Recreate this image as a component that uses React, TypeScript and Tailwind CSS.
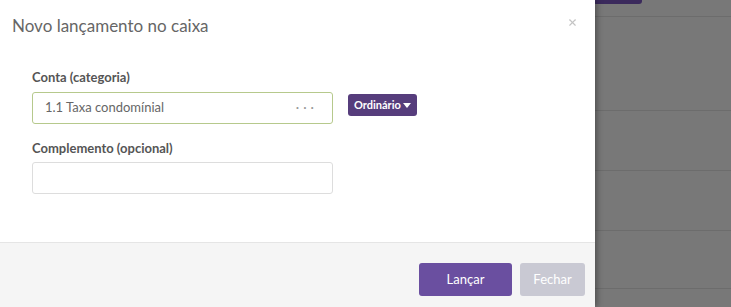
import { X } from "lucide-react";

const ROWS = [17, 94, 60, 60, 58];

const App = () => {
  return (
    <div
      className="flex h-[307px] w-[731px] overflow-hidden bg-[#787878]"
      style={{ fontFamily: "Lato, 'Open Sans', sans-serif" }}
    >
      <div className="relative z-10 flex w-[595px] shrink-0 flex-col bg-white shadow-[2px_0_6px_rgba(0,0,0,0.35)]">
        <div className="relative h-[52px] px-3 pt-[14px]">
          <h4 className="text-[17px] leading-[24px] text-[#666]">Novo lançamento no caixa</h4>
          <button className="absolute right-[17px] top-[17px] text-[#c4c4c4]">
            <X className="h-[11px] w-[11px]" strokeWidth={2.5} />
          </button>
        </div>

        <div className="flex-1 px-8 pt-[17px]">
          <label className="block text-[13px] font-bold leading-[16px] text-[#555]">Conta (categoria)</label>
          <div className="mt-[7px] flex items-start gap-[15px]">
            <div className="flex h-[32px] w-[301px] items-center justify-between rounded-[3px] border border-[#b6c98c] px-3 text-[13px] text-[#666]">
              <span>1.1 Taxa condomínial</span>
              <span className="mr-[2px] text-[13px] tracking-[4px] text-[#999]">···</span>
            </div>
            <button className="mt-[2px] flex h-[22px] items-center gap-[2px] rounded-[3px] bg-[#563d7c] px-[6px] text-[11px] font-bold text-white">
              Ordinário
              <svg width="8" height="5" viewBox="0 0 8 5">
                <path d="M0 0h8L4 5z" fill="white" />
              </svg>
            </button>
          </div>

          <label className="mt-[16px] block text-[13px] font-bold leading-[16px] text-[#555]">Complemento (opcional)</label>
          <div className="mt-[6px] h-[32px] w-[301px] rounded-[3px] border border-[#ddd]" />
        </div>

        <div className="flex h-[65px] justify-end gap-2 border-t border-[#e5e5e5] bg-[#f5f5f5] pr-[10px] pt-[20px]">
          <button className="h-[33px] w-[93px] rounded-[3px] bg-[#6a4fa0] text-[13px] text-white">Lançar</button>
          <button className="h-[33px] w-[65px] rounded-[3px] bg-[#c9c9d3] text-[13px] text-white">Fechar</button>
        </div>
      </div>

      <div className="relative flex flex-1 flex-col">
        <div className="absolute left-[-2px] top-0 h-[4px] w-[49px] rounded-b-[3px] bg-[#3b2a5c]" />
        {ROWS.map((h, i) => (
          <div key={i} className="border-b border-[#6c6c6c]" style={{ height: h }} />
        ))}
      </div>
    </div>
  );
};

export default App;
